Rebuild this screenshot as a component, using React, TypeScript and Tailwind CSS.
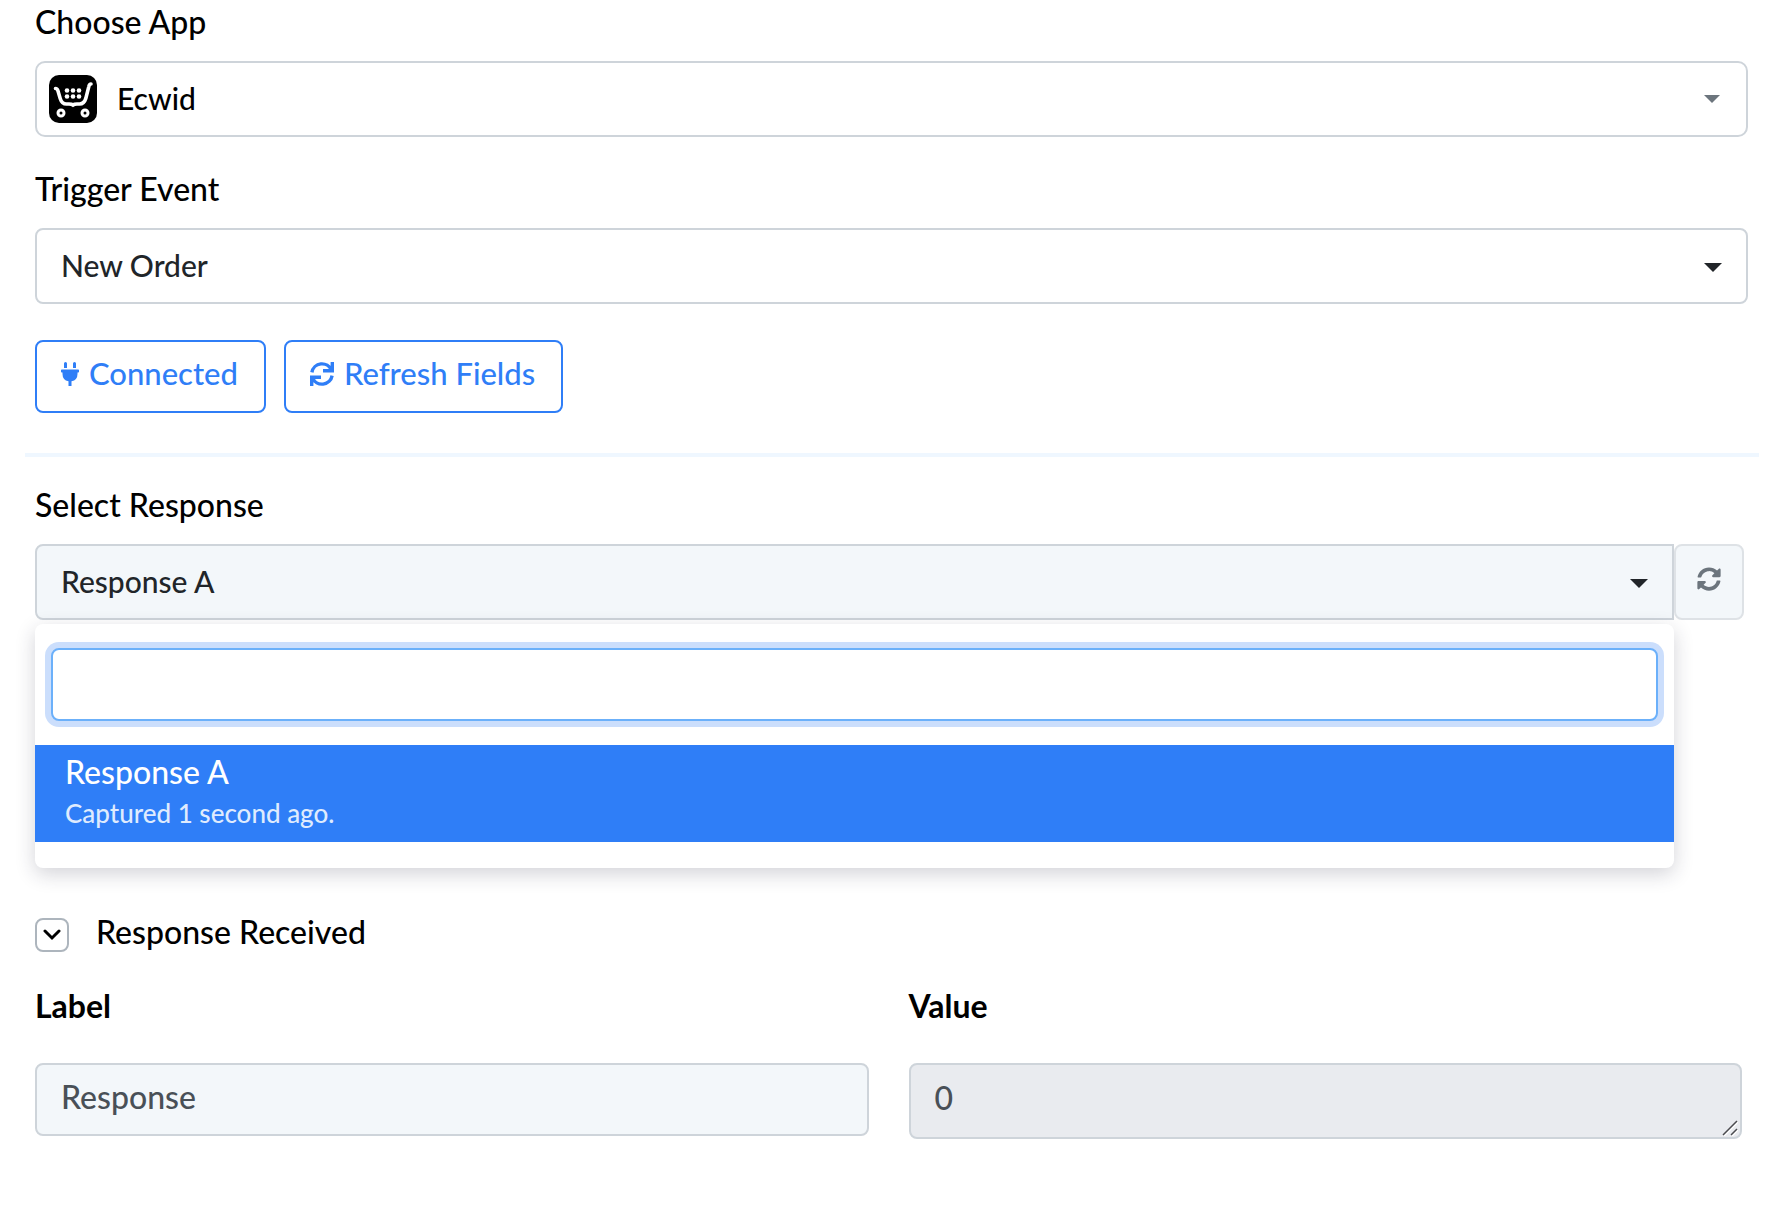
import React from "react";
import { FaPlug, FaSyncAlt } from "react-icons/fa";

function Caret({ className }: { className: string }) {
  return (
    <svg aria-hidden="true" viewBox="0 0 18 9" className={`pointer-events-none absolute ${className}`}>
      <path d="M0 0h18L9 9z" fill="currentColor" />
    </svg>
  );
}

function RefreshIcon() {
  return (
    <svg aria-hidden="true" viewBox="0 0 24 24" className="size-6">
      <g fill="none" stroke="currentColor" strokeWidth="3.400">
        <path d="M1.900 10.400A10.200 10.200 0 0 1 21.400 8.200M22.300 0v8.700H13" />
        <path d="M22.100 13.600A10.200 10.200 0 0 1 2.600 15.800M1.700 24v-8.700H11" />
      </g>
    </svg>
  );
}

function EcwidLogo() {
  return (
    <svg aria-hidden="true" viewBox="0 0 48 48" className="pointer-events-none absolute left-3.5 top-1/2 size-12 -translate-y-1/2">
      <rect width="48" height="48" rx="10" fill="#000" />
      <path d="M6.500 13.500c1.500 0 2 .7 2.500 2.400l2.200 7.500c1.200 3.900 2.800 5.600 6.200 5.600h2.600c1.800 0 3 .2 4 1 1-.8 2.200-1 4-1h2.600c3.400 0 5-1.700 6.200-5.600l3-11.800c.4-1.800 1-2.600 2.200-2.600" fill="none" stroke="#fff" strokeWidth="3.600" strokeLinecap="round" />
      <g fill="#fff">
        <circle cx="18" cy="15.500" r="2.300" /><circle cx="24" cy="15.500" r="2.300" /><circle cx="30" cy="15.500" r="2.300" />
        <circle cx="18" cy="21.500" r="2.300" /><circle cx="24" cy="21.500" r="2.300" /><circle cx="30" cy="21.500" r="2.300" />
      </g>
      <g fill="#000" stroke="#fff" strokeWidth="3">
        <circle cx="12" cy="38" r="3" /><circle cx="36" cy="38" r="3" />
      </g>
    </svg>
  );
}

const label = "block pb-0.5 text-[32px] leading-[43px] font-medium text-black";
const heading = "block pb-0.5 text-[32px] leading-[43px] font-bold text-black";
const field = "block h-[76px] w-full appearance-none border-2 border-[#ced4da] text-[30px] font-medium";
const action = "flex h-[73px] items-center gap-2.5 rounded-lg border-2 border-[#2f7ef7] pl-6 pr-[26px] pb-1.5 text-[31px] font-medium text-[#2f7ef7]";

export default function App() {
  return (
    <main className="bg-white pb-20 font-[Lato,sans-serif]">
      <section className="pl-[35px] pr-9">
        <label htmlFor="app" className={label}>Choose App</label>
        <div className="relative mt-4 text-[#6c757d]">
          <select id="app" className={`${field} rounded-[10px] bg-white pl-20 pb-0.5 text-black`}>
            <option>Ecwid</option>
          </select>
          <EcwidLogo />
          <Caret className="right-7 top-[34px] h-2 w-4" />
        </div>
        <label htmlFor="event" className={`${label} mt-[30px]`}>Trigger Event</label>
        <div className="relative mt-4 text-[#212529]">
          <select id="event" className={`${field} rounded-lg bg-white pl-6 pb-0.5`}>
            <option>New Order</option>
          </select>
          <Caret className="right-[26px] top-[35px] h-[9px] w-[18px]" />
        </div>
        <div className="mt-9 flex gap-[18px]">
          <button type="button" className={action}>
            <FaPlug aria-hidden="true" className="h-6 w-[18px]" />
            Connected
          </button>
          <button type="button" className={action}>
            <RefreshIcon />
            Refresh Fields
          </button>
        </div>
      </section>

      <hr className="mx-[25px] mt-10 border-t-4 border-[#eff7ff]" />

      <section className="mt-[26px] pl-[35px] pr-10">
        <label htmlFor="response" className={label}>Select Response</label>
        <div className="mt-4 flex">
          <div className="relative grow text-[#212529]">
            <select id="response" className={`${field} rounded-l-lg bg-[#f3f7fa] pl-6 pb-0.5`}>
              <option>Response A</option>
            </select>
            <Caret className="right-[26px] top-[35px] h-[9px] w-[18px]" />
            <div className="absolute inset-x-0 top-20 rounded-lg bg-white pb-[26px] pt-6 shadow-[0_6px_20px_rgba(33,37,60,0.2)]">
              <div className="px-4">
                <input
                  type="text"
                  aria-label="Search responses"
                  className="block h-[73px] w-full rounded-lg border-2 border-[#6bb0fa] bg-white px-5 text-[30px] shadow-[0_0_0_6px_#cbdefc] outline-none"
                />
              </div>
              <ul role="listbox" aria-label="Responses" className="mt-6">
                <li role="option" aria-selected="true" className="h-[97px] bg-[#2f7ef7] px-[30px] pt-1 font-medium text-white">
                  <p className="text-[32px] leading-[45px]">Response A</p>
                  <p className="text-[26px] leading-[38px] text-[#dfebfe]">Captured 1 second ago.</p>
                </li>
              </ul>
            </div>
          </div>
          <button type="button" aria-label="Refresh responses" className="flex w-[70px] items-center justify-center rounded-lg border-2 border-[#dee2e6] bg-[#f3f7fa] pb-1.5 text-[#6c757d]">
            <FaSyncAlt aria-hidden="true" className="size-6" />
          </button>
        </div>
      </section>

      <section className="mt-[298px] pl-[35px] pr-[42px]">
        <div className="flex h-[34px] items-center">
          <button type="button" aria-labelledby="received" aria-expanded="true" className="flex size-[34px] items-center justify-center rounded-lg border-2 border-[#adb5bd]">
            <svg aria-hidden="true" viewBox="0 0 18 12" className="h-3 w-[18px]">
              <path d="M2 2l7 7 7-7" fill="none" stroke="#000" strokeWidth="3" strokeLinecap="round" />
            </svg>
          </button>
          <h2 id="received" className="ml-[27px] pb-2 text-[32px] leading-[45px] font-medium text-black">Response Received</h2>
        </div>
        <div className="mt-8 grid grid-cols-2 gap-10">
          <div>
            <label htmlFor="name" className={heading}>Label</label>
            <input id="name" type="text" defaultValue="Response" className="mt-[34px] block h-[73px] w-full rounded-lg border-2 border-[#ced4da] bg-[#f3f7fa] px-6 pb-1.5 text-[32px] font-medium text-[#495057]" />
          </div>
          <div>
            <label htmlFor="value" className={heading}>Value</label>
            <div className="relative mt-[34px]">
              <textarea id="value" readOnly defaultValue="0" className="block h-[76px] w-full resize-none overflow-hidden rounded-lg border-2 border-[#ced4da] bg-[#e9ebef] px-6 pt-2.5 text-[32px] leading-[45px] font-medium text-[#495057]" />
              <svg aria-hidden="true" viewBox="0 0 16 16" className="pointer-events-none absolute bottom-[3px] right-1 size-4">
                <path d="M2 16L16 2M10 16l6-6" stroke="#fff" strokeWidth="1.500" />
                <path d="M1 15L15 1M9 15l6-6" stroke="#4b4b4f" strokeWidth="1.500" />
              </svg>
            </div>
          </div>
        </div>
      </section>
    </main>
  );
}
